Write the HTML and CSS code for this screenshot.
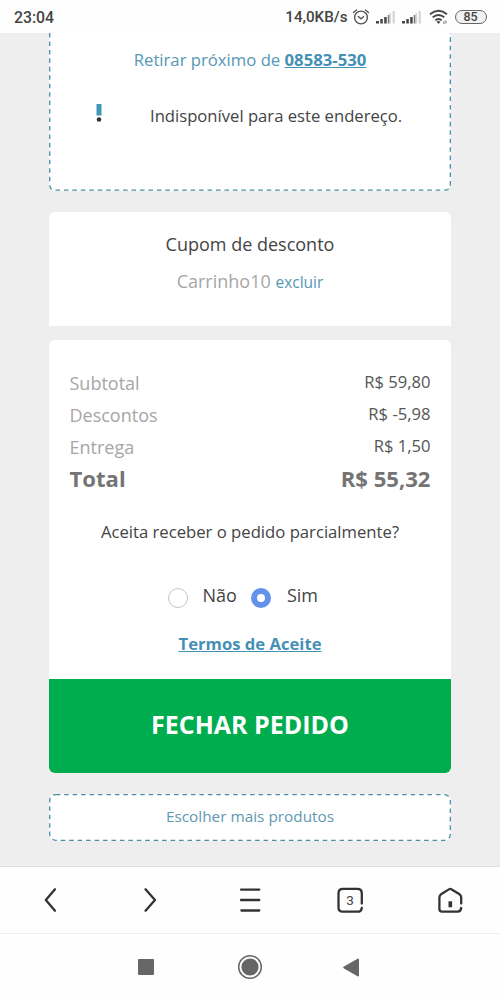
FILE: index.html
```html
<!DOCTYPE html>
<html lang="pt-BR">
<head>
<meta charset="utf-8">
<title>Carrinho</title>
<link rel="stylesheet" href="styles.css">
</head>
<body>
<header class="status">
  <span class="clock">23:04</span>
  <div class="indicators">
    <span class="speed">14,0KB/s</span>
    <svg class="alarm" width="18" height="18" viewBox="0 0 18 18" fill="none" stroke="#555" stroke-width="1.4" stroke-linecap="round"><circle cx="9" cy="9.5" r="6.4"/><path d="M1.5 4.5 4.5 2M16.500 4.500 13.500 2M6.300 8.500 9 10.800 11.500 8.800"/></svg>
    <svg class="signal" width="20" height="14" viewBox="0 0 20 14"><path fill="#444" d="M0 11h3v2.500H0zM4.300 9h2.500v4.500H4.300zM8.200 7h2.500v6.500H8.200z"/><path fill="#777" d="M11.800 5h1.700v8.500h-1.700z"/><path fill="#d4d4d4" d="M13.500 3h1.500v10.500h-1.500zM16.600 1h2.200v12.500h-2.200z"/></svg>
    <svg class="signal second" width="20" height="14" viewBox="0 0 20 14"><path fill="#444" d="M0 11h3v2.500H0zM4.300 9h2.500v4.500H4.300zM8.200 7h2.500v6.500H8.200z"/><path fill="#777" d="M11.800 5h1.700v8.500h-1.700z"/><path fill="#d4d4d4" d="M13.500 3h1.500v10.500h-1.500zM16.600 1h2.200v12.500h-2.200z"/></svg>
    <svg class="wifi" width="20" height="16" viewBox="0 0 20 16" fill="none" stroke="#444" stroke-width="1.900"><path d="M1 5.200Q9.500-1.600 18 5.200M3.700 8.300Q9.500 3.600 15.300 8.300M6.300 11.200Q9.500 8.600 12.700 11.200"/><path d="M7.500 12.600Q9.500 11.200 11.500 12.600L9.500 15z" fill="#444" stroke="none"/><path d="M15 12v3M17 11.500v3" stroke="#888" stroke-width="1.200"/></svg>
    <span class="battery">85</span>
  </div>
</header>
<main class="page">
  <section class="pickup">
    <svg class="dashes" width="402" height="160"><path d="M.7 0V151.500Q.7 157.200 6.400 157.200H395.600Q401.300 157.200 401.300 151.500V0"/></svg>
    <p class="pickup-title">Retirar próximo de <a class="zip">08583-530</a></p>
    <div class="notice">
      <svg class="bang" width="6" height="20" viewBox="0 0 6 20"><path fill="#4196b4" d="M.5 1h5v11.500h-5z"/><circle cx="3" cy="16.500" r="2.300" fill="#333"/></svg>
      <span class="notice-text">Indisponível para este endereço.</span>
    </div>
  </section>
  <section class="coupon">
    <h2 class="coupon-title">Cupom de desconto</h2>
    <p class="coupon-line"><span class="code">Carrinho10</span> <a class="remove">excluir</a></p>
  </section>
  <section class="summary">
    <div class="row"><span class="label">Subtotal</span><span class="value">R$ 59,80</span></div>
    <div class="row"><span class="label">Descontos</span><span class="value">R$ -5,98</span></div>
    <div class="row"><span class="label">Entrega</span><span class="value">R$ 1,50</span></div>
    <div class="row total"><span>Total</span><span>R$ 55,32</span></div>
    <p class="question">Aceita receber o pedido parcialmente?</p>
    <div class="options">
      <i class="radio"></i><span class="option no">Não</span>
      <i class="radio checked"></i><span class="option yes">Sim</span>
    </div>
    <a class="terms">Termos de Aceite</a>
  </section>
  <button class="checkout"><span>FECHAR PEDIDO</span></button>
  <a class="more">
    <svg class="dashes" width="402" height="48"><rect x=".7" y=".6" width="400.600" height="45.700" rx="6"/></svg>
    <span class="more-text">Escolher mais produtos</span>
  </a>
</main>
<nav class="browser">
  <svg width="28" height="28" viewBox="0 0 28 28"><path d="M19 3.300 9.800 14l9.200 10.700"/></svg>
  <svg width="28" height="28" viewBox="0 0 28 28"><path d="M9.500 3.300 19 14 9.500 24.700"/></svg>
  <svg width="28" height="28" viewBox="0 0 28 28"><path d="M5 3.600h18.300M5 14h18.300M5.400 24.500h17.900"/></svg>
  <span class="tabs"><svg width="28" height="28" viewBox="0 0 28 28"><path d="M25.800 17.500V7.300Q25.800 2.800 21.300 2.800H7Q2.500 2.800 2.500 7.300V21.200Q2.500 25.700 7 25.700H21.300Q25.500 25.700 25.800 21.800"/></svg><b class="count">3</b></span>
  <svg width="28" height="28" viewBox="0 0 28 28"><path d="M25.200 17.500V11.500Q25.200 9.500 23.600 8.300L15.700 3.400Q14.300 2.500 12.900 3.400L5 8.300Q3.400 9.500 3.400 11.500V23Q3.400 25.600 6 25.600H21.500Q24.800 25.600 25.200 22"/><path d="M14.300 15.300v6" stroke-width="3.600" stroke-linecap="butt"/></svg>
</nav>
<footer class="system">
  <svg width="16" height="16"><rect width="16" height="16" rx="1" fill="#666"/></svg>
  <svg width="26" height="26" viewBox="0 0 26 26"><circle cx="13" cy="13" r="11.300" fill="none" stroke="#666" stroke-width="1.500"/><circle cx="13" cy="13" r="8.600" fill="#666"/></svg>
  <svg class="back" width="16" height="19" viewBox="0 0 16 19"><path fill="#666" d="M15 .5q1 0 1 1v16q0 1-1 1L.6 10.200q-.8-.7 0-1.400z"/></svg>
</footer>
</body>
</html>
```
FILE: styles.css
```css
* { box-sizing: border-box; }
body { margin: 0; width: 500px; height: 1000px; overflow: hidden; background: #fefefe; color: #444; font-family: "Open Sans", sans-serif; }
p, h2 { margin: 0; font-weight: 400; }
svg { display: block; flex: none; }

.status { display: flex; justify-content: space-between; align-items: center; height: 33px; padding: 1px 13.500px 0 14px; font-family: Roboto, sans-serif; font-weight: 500; color: #444; }
.clock { font-size: 15.800px; }
.indicators { display: flex; align-items: center; }
.speed { font-size: 15.200px; }
.alarm { margin-left: 4px; }
.signal { margin-left: 6px; }
.wifi { margin-left: 7px; }
.battery { width: 32px; height: 14px; margin-left: 6px; border: 1.500px solid #666; border-radius: 7px; background: #f2f2f2; font-size: 12.500px; line-height: 12px; text-align: center; }

.page { height: 833px; padding: 0 49px; background: #eee; }
.dashes { position: absolute; inset: 0; fill: none; stroke: #4a8ea8; stroke-width: 1.300; stroke-dasharray: 4.600 3.850; }

.pickup { position: relative; height: 158px; padding-top: 15px; border-radius: 0 0 7px 7px; background: #fff; text-align: center; }
.pickup-title { font-size: 16.700px; line-height: 24px; color: #5698b5; }
.zip { font-weight: 700; text-decoration: underline; color: #4590b5; }
.notice { display: flex; align-items: center; margin-top: 31px; padding-left: 47px; }
.notice-text { margin-left: 48px; font-size: 16.650px; line-height: 24px; white-space: nowrap; }
.bang { margin-bottom: 5px; }

.coupon { height: 114px; margin-top: 21px; padding-top: 20px; border-radius: 6px 6px 0 0; background: #fff; text-align: center; }
.coupon-title { font-size: 18px; line-height: 24px; }
.coupon-line { margin-top: 13px; font-size: 18px; line-height: 24px; }
.code { color: #a6a6a6; }
.remove { font-size: 15.500px; color: #5698b5; }

.summary { display: flex; flex-direction: column; height: 339px; margin-top: 14px; padding: 26px 20.500px 0; border-radius: 6px 6px 0 0; background: #fff; }
.row { display: flex; justify-content: space-between; height: 32px; line-height: 32px; }
.label { padding-top: 1px; font-size: 18px; color: #a6a6a6; }
.value { font-size: 16.600px; color: #555; }
.total { font-size: 22.100px; font-weight: 700; color: #747474; }
.question { margin-top: 26px; font-size: 16.680px; line-height: 24px; text-align: center; white-space: nowrap; }
.options { display: flex; margin-top: 39px; padding-left: 98px; font-size: 18px; line-height: 24px; }
.radio { width: 20px; height: 20px; margin-top: 5px; border: 1.500px solid #c5c5c5; border-radius: 50%; }
.option { margin-left: 15px; }
.no { margin-right: 14px; }
.yes { margin-left: 16px; }
.checked { border: 6px solid #6492eb; }
.terms { margin-top: 24px; font-size: 16.650px; font-weight: 700; line-height: 24px; text-align: center; text-decoration: underline; color: #4590b5; }

.checkout { display: block; width: 402px; height: 94px; padding: 0 0 4px; border: 0; border-radius: 0 0 6px 6px; background: #00ad4e; color: #fff; font: 700 25px "Open Sans", sans-serif; }
.more { position: relative; display: flex; justify-content: center; height: 47px; margin-top: 21px; border-radius: 7px; background: #fff; }
.more-text { font-size: 15.350px; line-height: 44px; color: #6098b0; }

.browser { display: flex; justify-content: space-between; align-items: center; height: 68px; padding: 0 36px; border-top: 1px solid #ddd; border-bottom: 1px solid #eee; fill: none; stroke: #333; stroke-width: 2.300; stroke-linecap: round; stroke-linejoin: round; }
.tabs { display: grid; place-items: center; }
.tabs > * { grid-area: 1 / 1; }
.count { font: 400 13.500px Roboto, sans-serif; line-height: 28px; }
.system { display: flex; justify-content: center; align-items: center; gap: 83px; height: 66px; }
.back { margin: 0 3px 0 -3px; }
```
